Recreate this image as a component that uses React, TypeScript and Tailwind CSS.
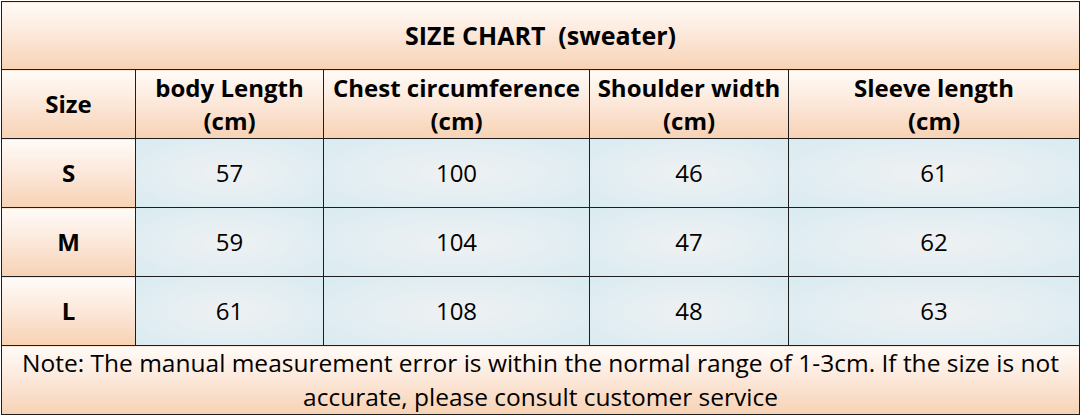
import React from 'react'

const peach = 'bg-[linear-gradient(to_bottom,#fffbf8_0%,#fce9dc_45%,#f7d2b4_100%)]'
const blue = 'bg-[radial-gradient(ellipse_at_center,#eff1f2_0%,#e4eef2_50%,#d9ebf1_100%)]'
const cell = 'border border-[#1e1e1e] text-center align-middle p-0'

const rows = [
    ['S', '57', '100', '46', '61'],
    ['M', '59', '104', '47', '62'],
    ['L', '61', '108', '48', '63'],
]

const App = () => {
    return (
        <div className="w-[1080px] h-[416px] bg-white pl-px pt-px font-['Open_Sans','Noto_Sans',sans-serif] text-black">
            <table className="border-collapse w-[1078px] table-fixed">
                <colgroup>
                    <col className="w-[134px]" />
                    <col className="w-[188px]" />
                    <col className="w-[266px]" />
                    <col className="w-[199px]" />
                    <col className="w-[291px]" />
                </colgroup>
                <tbody>
                    <tr className="h-[68px]">
                        <td colSpan={5} className={`${cell} ${peach} text-[25px] font-bold`}>
                            SIZE CHART&nbsp;&nbsp;(sweater)
                        </td>
                    </tr>
                    <tr className="h-[69px]">
                        <td className={`${cell} ${peach} text-[24px] font-bold`}>Size</td>
                        <td className={`${cell} ${peach} text-[24px] font-bold leading-[33px] whitespace-nowrap`}>body Length<br />(cm)</td>
                        <td className={`${cell} ${peach} text-[24px] font-bold leading-[33px] whitespace-nowrap`}>Chest circumference<br />(cm)</td>
                        <td className={`${cell} ${peach} text-[24px] font-bold leading-[33px] whitespace-nowrap`}>Shoulder width<br />(cm)</td>
                        <td className={`${cell} ${peach} text-[24px] font-bold leading-[33px]`}>Sleeve length<br />(cm)</td>
                    </tr>
                    {rows.map((r) => (
                        <tr key={r[0]} className="h-[69px]">
                            <td className={`${cell} ${peach} text-[24px] font-bold`}>{r[0]}</td>
                            {r.slice(1).map((v, i) => (
                                <td key={i} className={`${cell} ${blue} text-[24px]`}>{v}</td>
                            ))}
                        </tr>
                    ))}
                    <tr className="h-[69px]">
                        <td colSpan={5} className={`${cell} ${peach} text-[24.5px] leading-[34px] whitespace-nowrap`}>
                            Note: The manual measurement error is within the normal range of 1-3cm. If the size is not<br />
                            accurate, please consult customer service
                        </td>
                    </tr>
                </tbody>
            </table>
        </div>
    )
}

export default App
